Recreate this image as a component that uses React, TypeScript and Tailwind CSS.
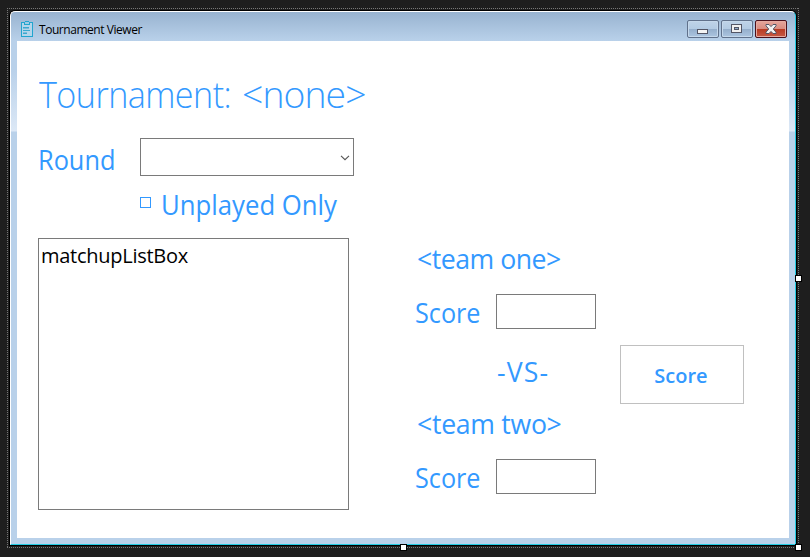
import type { ReactNode } from "react";

const FONT = "font-['Open_Sans','Noto_Sans',sans-serif]";

function Label({ className = "", children }: { className?: string; children: ReactNode }) {
  return (
    <span className={`block whitespace-nowrap text-[26.67px] leading-9 text-[#3399ff] ${className}`}>{children}</span>
  );
}

function ClipboardIcon() {
  return (
    <svg width="14" height="17" viewBox="0 0 14 17" shapeRendering="crispEdges" className="block">
      <rect x="1" y="1" width="12" height="15" fill="#b5d5ea" />
      <path d="M1.5 1.5h11v14h-11z" fill="none" stroke="#22a5cf" />
      <path d="M4 1h1V0h4v1h1v3H4z" fill="#22a5cf" />
      <path d="M5 1h4v2H5z" fill="#9fcbe4" />
      <path d="M3 6h6v1H3zM3 9h7v1H3zM3 12h4v1H3z" fill="#3aa9d0" />
      <path d="M3 7h6v1H3zM3 11h4v1H3z" fill="#7cbcd9" />
    </svg>
  );
}

function CaptionButton({ close = false, children }: { close?: boolean; children: ReactNode }) {
  return (
    <div
      className={`flex h-[18px] w-8 items-center justify-center rounded-[2px] border ${
        close
          ? "border-[#4b101b] bg-[linear-gradient(#e6a69c_0,#d98c80_49%,#b83a22_50%,#c65a45_100%)] shadow-[inset_0_0_0_1px_#e5aaa0]"
          : "border-[#60718b] bg-[linear-gradient(#bfd3e8_0,#b3cbe3_49%,#94aecb_50%,#acc5e0_100%)] shadow-[inset_0_0_0_1px_#c5d8eb]"
      }`}
    >
      {children}
    </div>
  );
}

function ScoreRow() {
  return (
    <div className="flex h-[35px]">
      <Label className="-ml-px w-[81px] origin-left scale-x-[0.945] pt-px">Score</Label>
      <div className="h-[35px] w-[100px] border border-[#7a7a7a] bg-white" />
    </div>
  );
}

function Handle({ className }: { className: string }) {
  return <div className={`absolute size-[7px] border border-black bg-white ${className}`} />;
}

export default function App() {
  return (
    <div className={`relative h-[557px] w-[810px] overflow-hidden bg-[#1e1e1e] pl-[9px] pt-[10px] ${FONT}`}>
      <svg className="absolute left-0 top-0" width="810" height="557" shapeRendering="crispEdges">
        <path d="M7 8.5H799M7 547.5H799M7.5 8V548M798.5 8V548" fill="none" stroke="#777777" strokeDasharray="1 1" />
      </svg>

      <div className="h-[536px] w-[788px] rounded-t-[6px] bg-black p-px">
        <div className="h-[534px] w-[786px] overflow-hidden rounded-t-[5px] border-y border-l border-r border-b-[#22cbe3] border-l-white border-r-[#22cbe3] border-t-white bg-[linear-gradient(#98b3d0_0,#b9d1ea_29px,#b9d1ea_58px,#dce8f6_119px,#b9d1ea_120px)]">
          <div className="flex h-[29px] items-start pl-[9px]">
            <div className="pt-[9px]"><ClipboardIcon /></div>
            <span className="ml-[5px] mt-[9px] whitespace-nowrap text-[12px] leading-[18px] tracking-[-0.45px] text-black">
              Tournament Viewer
            </span>
            <div className="ml-auto mr-2 mt-2 flex gap-[2px]">
              <CaptionButton>
                <svg width="11" height="5" className="mt-[4px] -ml-px" shapeRendering="crispEdges">
                  <rect x=".5" y=".5" width="10" height="4" rx="1" fill="#f4f4f4" stroke="#535666" />
                </svg>
              </CaptionButton>
              <CaptionButton>
                <svg width="11" height="9" className="-ml-px -mt-px" shapeRendering="crispEdges">
                  <rect x=".5" y=".5" width="10" height="8" fill="#f0f0f0" stroke="#535666" />
                  <rect x="3.5" y="3.5" width="4" height="2" fill="#8fabc9" stroke="#535666" />
                </svg>
              </CaptionButton>
              <CaptionButton close>
                <svg width="12" height="10" viewBox="0 0 12 10" className="-ml-px -mt-px">
                  <path
                    d="M1 .5h3L6 2.6 8 .5h3v1.3L8.3 5 11 8.2v1.3H8L6 7.4 4 9.5H1V8.2L3.7 5 1 1.8z"
                    fill="#f2f2f2"
                    stroke="#535666"
                  />
                </svg>
              </CaptionButton>
            </div>
          </div>

          <main className="mx-[6px] h-[497px] bg-white pl-[21px] pt-7">
            <h1 className="flex h-[50px] whitespace-nowrap pl-px text-[37.3px] font-light leading-[50px] text-[#3399ff]">
              <span className="w-[203px] origin-left scale-x-[0.915] tracking-[-0.6px]">Tournament:</span>
              <span className="tracking-[-0.9px]">&lt;none&gt;</span>
            </h1>

            <div className="mt-[19px] flex h-[38px]">
              <Label className="w-[102px] origin-left scale-x-[0.95] pt-1">Round</Label>
              <div className="flex w-[214px] items-center justify-end border border-[#7a7a7a] bg-white pr-[3px]">
                <svg width="10" height="6" viewBox="0 0 10 6" className="mt-[2px]">
                  <path d="M1 .8 5 4.7 9 .8" fill="none" stroke="#555555" strokeWidth="1.1" />
                </svg>
              </div>
            </div>

            <div className="ml-[102px] mt-[10px] flex h-9">
              <div className="mt-[11px] size-[11px] border border-[#3399ff] bg-white" />
              <Label className="ml-[10px] origin-left scale-x-[0.965] pt-px">Unplayed Only</Label>
            </div>

            <div className="mt-4 flex">
              <div className="h-[272px] w-[311px] shrink-0 border border-[#7a7a7a] bg-white pl-[2px] pt-[2px]">
                <span className="block whitespace-nowrap text-[20px] leading-[30px] tracking-[-0.27px] text-black">
                  matchupListBox
                </span>
              </div>
              <div className="ml-[67px] w-[180px] shrink-0">
                <Label className="mt-[3px] pl-px tracking-[-0.5px]">&lt;team one&gt;</Label>
                <div className="mt-[17px]"><ScoreRow /></div>
                <Label className="ml-[80px] mt-[25px] pl-px tracking-[1.1px]">-VS-</Label>
                <Label className="mt-[16px] pl-px tracking-[-0.3px]">&lt;team two&gt;</Label>
                <div className="mt-[17px]"><ScoreRow /></div>
              </div>
              <button className="ml-6 mt-[107px] h-[59px] w-[124px] border border-[#c0c0c0] bg-white pr-[2px] pt-[2px] text-[20px] font-semibold leading-[30px] text-[#3399ff]">
                Score
              </button>
            </div>
          </main>
        </div>
      </div>

      <Handle className="left-[400px] top-[544px]" />
      <Handle className="left-[795px] top-[275px]" />
      <Handle className="left-[795px] top-[544px]" />
    </div>
  );
}
